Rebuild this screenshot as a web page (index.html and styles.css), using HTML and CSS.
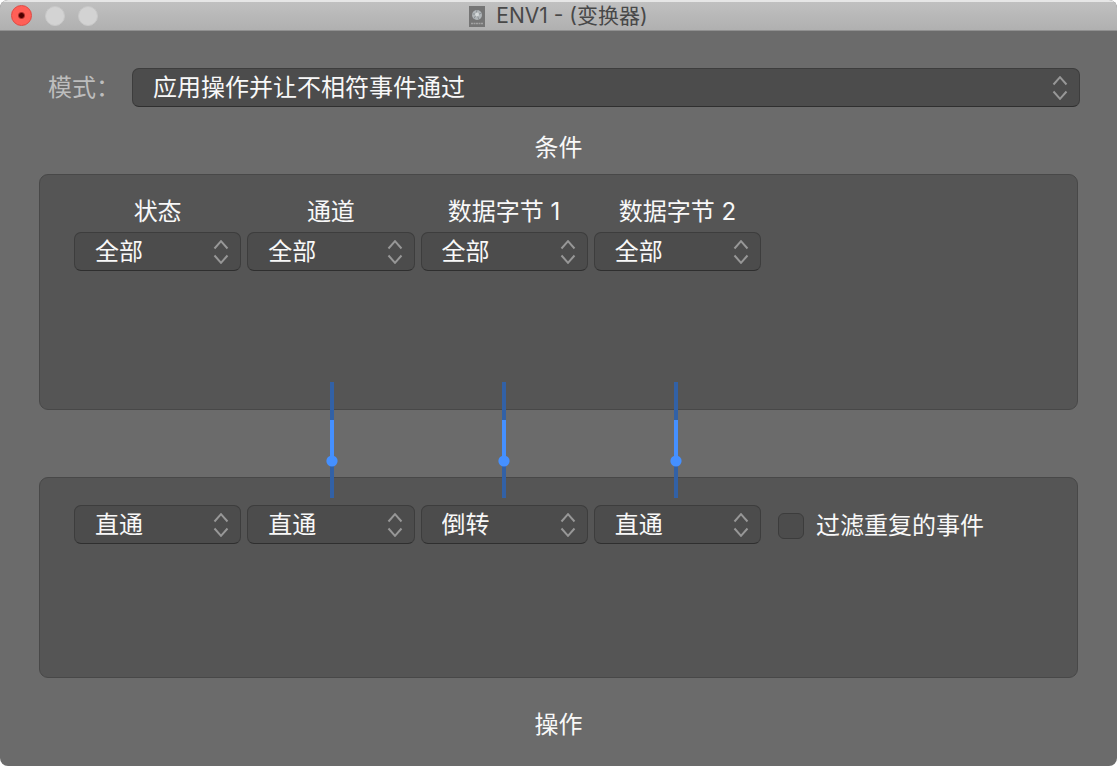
FILE: index.html
```
<!DOCTYPE html>
<html lang="zh-CN">
<head>
  <meta charset="UTF-8">
  <meta name="viewport" content="width=device-width, initial-scale=1.0">
  <title>ENV1 - (变换器)</title>
  <link rel="stylesheet" href="styles.css">
</head>
<body>
  <svg class="defs" aria-hidden="true">
    <symbol id="arrows" viewBox="0 0 16 24">
      <path d="M1.5 8.500 L8 1.2 L14.5 8.500 M1.5 15.500 L8 22.8 L14.5 15.500" fill="none" stroke="#979797" stroke-width="2"/>
    </symbol>
    <symbol id="cable" viewBox="0 0 12 116">
      <rect x="4" y="0" width="4" height="116" fill="#3261a6"/>
      <rect x="4" y="38" width="4" height="42" fill="#4590ff"/>
      <circle cx="6" cy="79" r="5.6" fill="#4590ff"/>
    </symbol>
  </svg>

  <div class="window">
    <header class="titlebar">
      <div class="lights">
        <button class="light close" aria-label="关闭"></button>
        <button class="light" aria-label="最小化"></button>
        <button class="light" aria-label="缩放"></button>
      </div>
      <svg class="doc-icon" viewBox="0 0 16 21" aria-hidden="true">
        <rect width="16" height="21" fill="#757575"/>
        <circle cx="8" cy="9" r="5" fill="#b0b5b8"/>
        <path d="M3.5 8 L7 8 L8 4 M8 9 L12.5 7 M8 9 L10 13.5 M7 9 L5 12.5" stroke="#8b9194" stroke-width="1" fill="none"/>
        <circle cx="8" cy="8.500" r="2" fill="#d5d9da"/>
        <path d="M2 17.500 H14" stroke="#a2a2a2" stroke-width="1.500" stroke-dasharray="2 .5"/>
      </svg>
      <h1>ENV1 - (变换器)</h1>
    </header>

    <main>
      <div class="mode">
        <label for="mode">模式：</label>
        <div class="select">
          <select id="mode"><option>应用操作并让不相符事件通过</option></select>
          <svg><use href="#arrows"/></svg>
        </div>
      </div>

      <h2>条件</h2>
      <section class="panel conditions">
        <div class="columns">
          <div class="field">
            <label for="status">状态</label>
            <div class="select">
              <select id="status"><option>全部</option></select>
              <svg><use href="#arrows"/></svg>
            </div>
          </div>
          <div class="field">
            <label for="channel">通道</label>
            <div class="select">
              <select id="channel"><option>全部</option></select>
              <svg><use href="#arrows"/></svg>
            </div>
          </div>
          <div class="field">
            <label for="data1">数据字节 1</label>
            <div class="select">
              <select id="data1"><option>全部</option></select>
              <svg><use href="#arrows"/></svg>
            </div>
          </div>
          <div class="field">
            <label for="data2">数据字节 2</label>
            <div class="select">
              <select id="data2"><option>全部</option></select>
              <svg><use href="#arrows"/></svg>
            </div>
          </div>
        </div>
      </section>

      <div class="patch">
        <div class="cables">
          <svg><use href="#cable"/></svg>
          <svg><use href="#cable"/></svg>
          <svg><use href="#cable"/></svg>
        </div>
      </div>

      <section class="panel operations">
        <div class="columns">
          <div class="select">
            <select aria-label="状态操作"><option>直通</option></select>
            <svg><use href="#arrows"/></svg>
          </div>
          <div class="select">
            <select aria-label="通道操作"><option>直通</option></select>
            <svg><use href="#arrows"/></svg>
          </div>
          <div class="select">
            <select aria-label="数据字节 1 操作"><option>倒转</option></select>
            <svg><use href="#arrows"/></svg>
          </div>
          <div class="select">
            <select aria-label="数据字节 2 操作"><option>直通</option></select>
            <svg><use href="#arrows"/></svg>
          </div>
        </div>
        <div class="filter">
          <input type="checkbox" id="filter">
          <label for="filter">过滤重复的事件</label>
        </div>
      </section>
      <h2 class="bottom">操作</h2>
    </main>
  </div>
</body>
</html>
```
FILE: styles.css
```
* {box-sizing: border-box;}
body {margin: 0; background: #fff; color: #f8f8f8; font: 24px/36px Inter, "Noto Sans CJK SC", sans-serif;}
.defs {position: absolute; width: 0; height: 0;}

.window {min-height: 100vh; background: #6b6b6b; border-radius: 8px; overflow: hidden;}

/* title bar */
.titlebar {position: relative; display: flex; align-items: center; justify-content: center; gap: 11px; height: 31px; background: linear-gradient(#c0c0c0, #b0b0b0); border-top: 2px solid #e6e6e6; border-bottom: 1px solid #909090;}
.titlebar h1 {margin: 0; font-size: 21px; font-weight: 400; line-height: 28px; color: #484848;}
.lights {position: absolute; left: 11px; top: 3px; display: flex; align-items: center; gap: 13px;}
.light {width: 20px; height: 20px; padding: 0; border: 1px solid #c8c8c8; border-radius: 50%; background: #d3d3d3;}
.light.close {width: 21px; height: 21px; border-color: #e2463f; background: radial-gradient(circle, #4d0000 2px, #ff5f57 4px);}
.doc-icon {width: 16px; height: 21px;}

main {padding: 37px 39px 0;}
h2 {margin: 23px 0 8px; font-size: 24px; font-weight: 400; line-height: 36px; text-align: center;}

/* pop-up menus */
.select {position: relative;}
.select select {display: block; width: 100%; height: 39px; padding: 0 44px 0 20px; appearance: none; border: 1px solid #3d3d3d; border-bottom-color: #2f2f2f; border-radius: 7px; background: #4c4c4c; color: inherit; font: inherit; line-height: 36px;}
.select svg {position: absolute; right: 12px; top: 8px; width: 16px; height: 24px; pointer-events: none;}

.mode {display: flex; align-items: center; padding-left: 9px;}
.mode label {width: 84px; color: #bdbdbd;}
.mode .select {flex: 1; margin-right: -2px;}

/* panels */
.panel {display: flex; align-items: flex-start; gap: 17px; padding: 0 34px; background: #555; border: 1px solid #484848; border-radius: 9px;}
.conditions {min-height: 236px; padding-top: 19px;}
.operations {min-height: 201px; padding-top: 27px;}
.columns {display: grid; grid-template-columns: repeat(4, 1fr); gap: 6px; width: 687px;}
.field label {display: block; height: 38px; text-align: center;}

/* cables between the two panels */
.patch {position: relative; height: 67px;}
.cables {position: absolute; left: 287px; top: -28px; display: flex; gap: 160px;}
.cables svg {width: 12px; height: 116px;}

.filter {display: flex; align-items: center; gap: 12px; height: 42px;}
.filter input {width: 26px; height: 26px; margin: 0; appearance: none; border: 1px solid #3c3c3c; border-radius: 6px; background: #4c4c4c;}
.filter input:checked {background: #4590ff;}

h2.bottom {margin: 29px 0 0;}
```
